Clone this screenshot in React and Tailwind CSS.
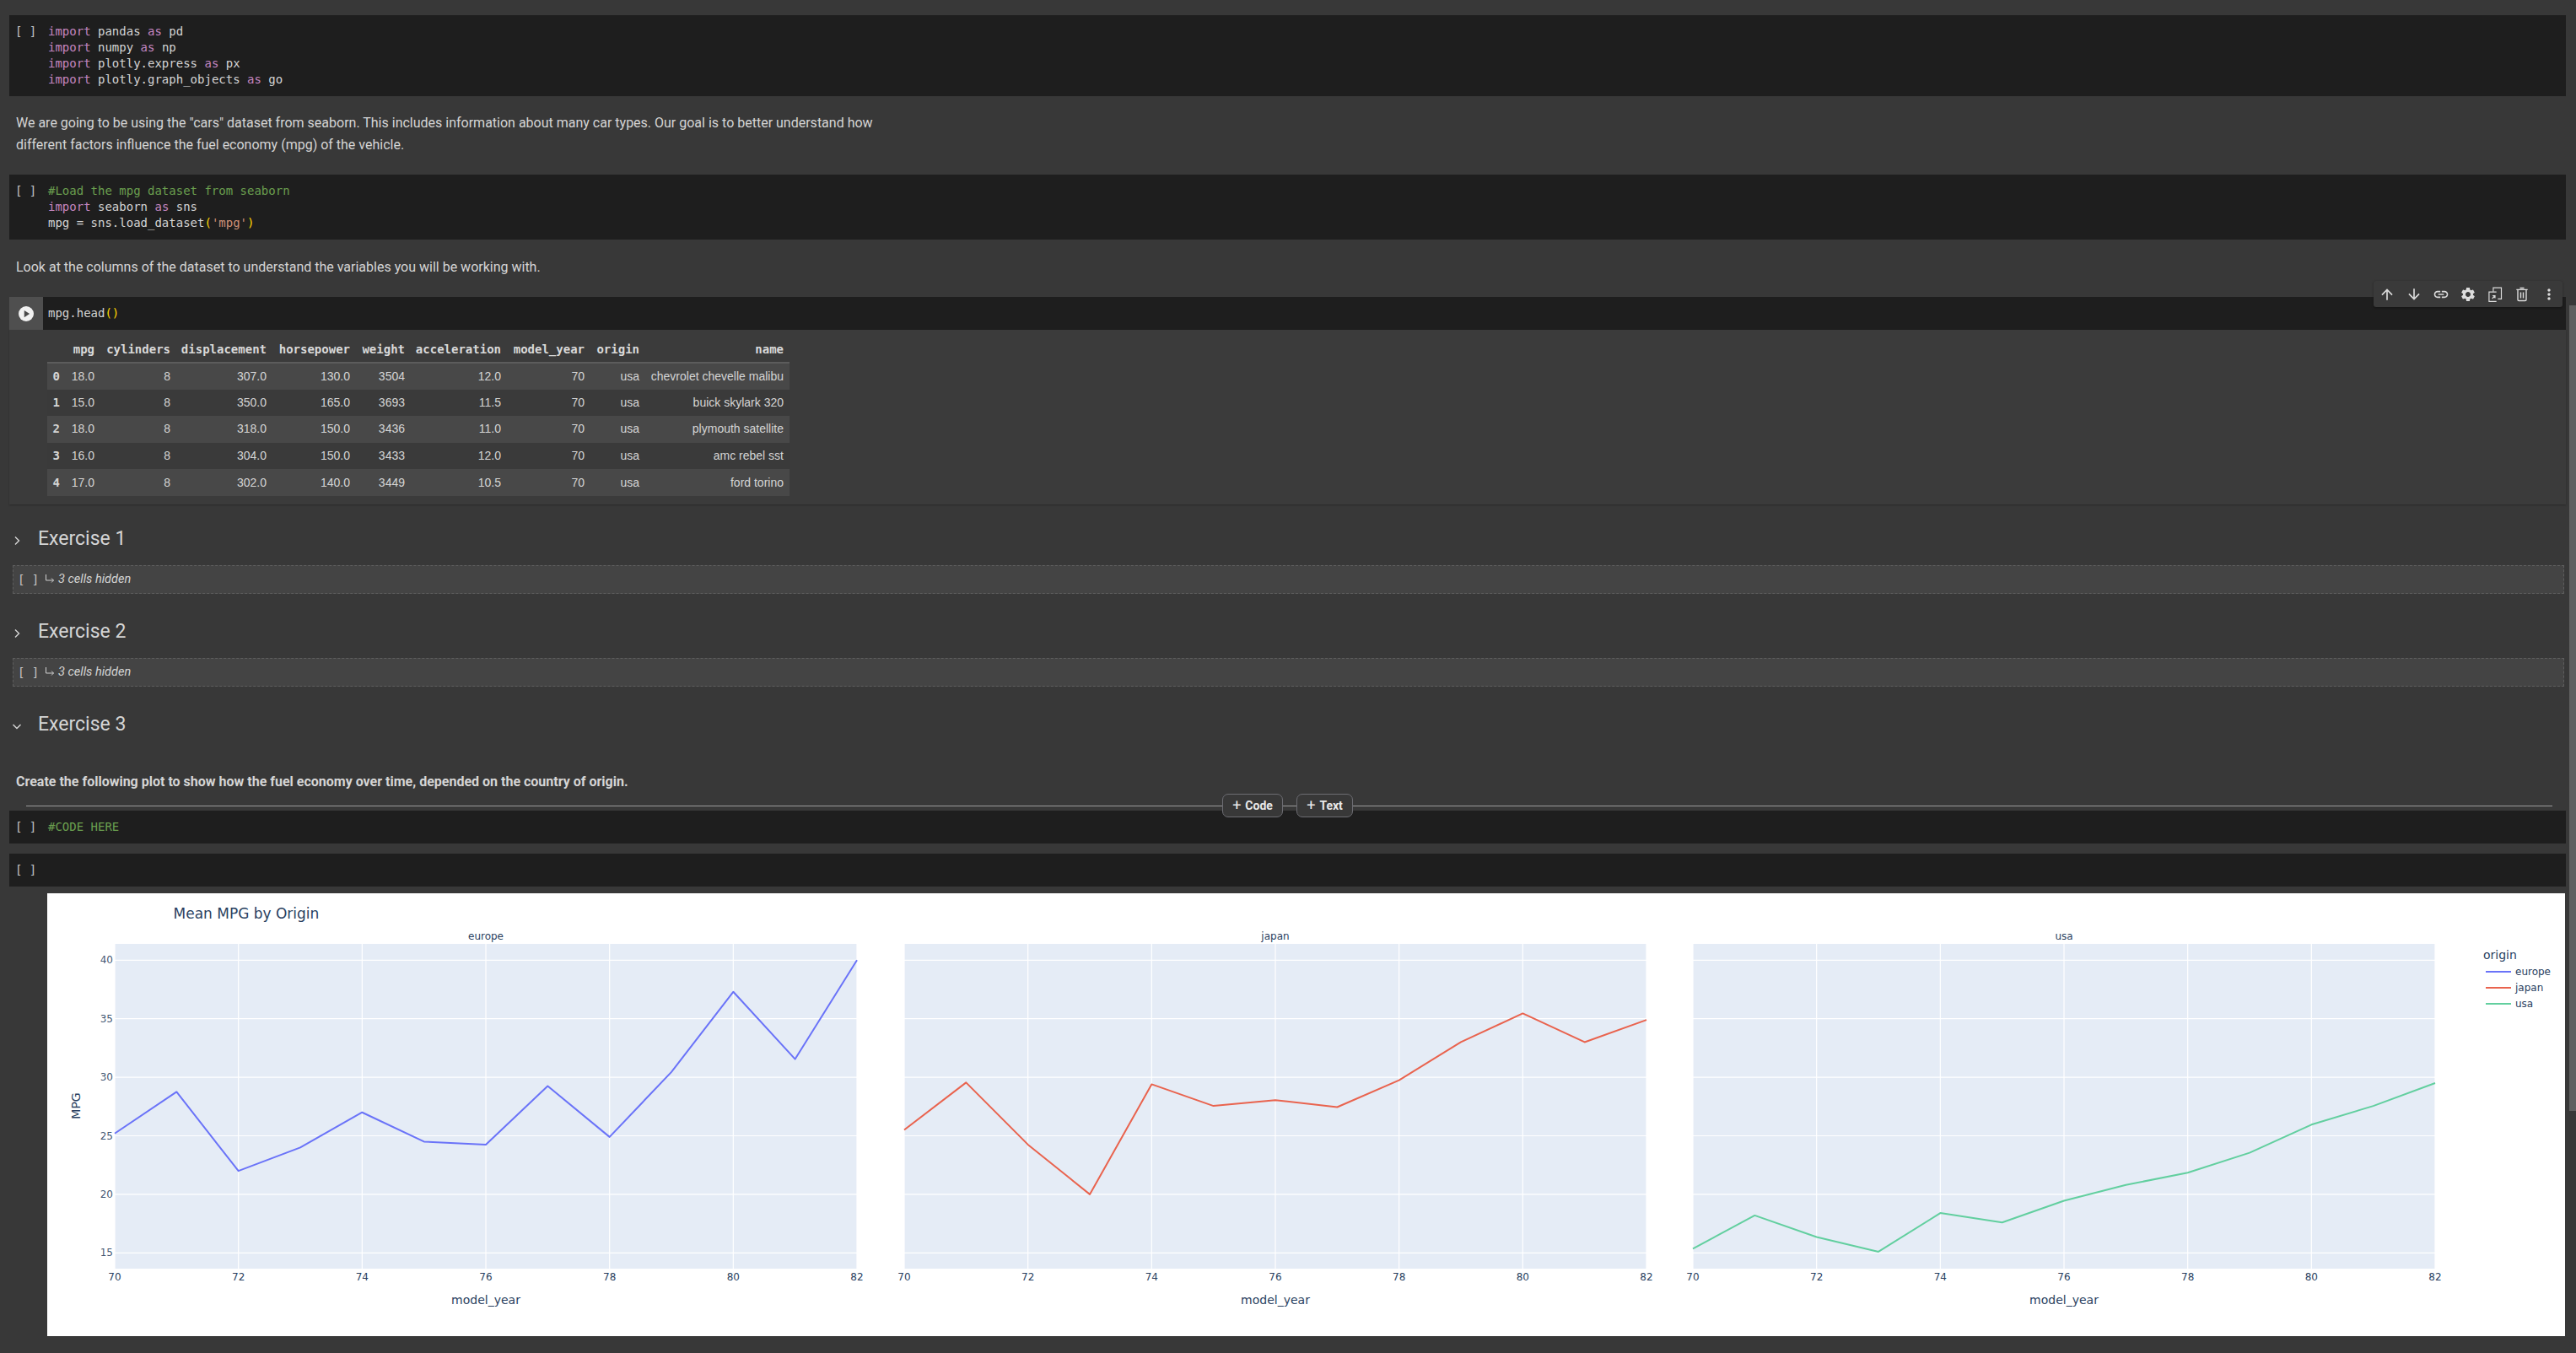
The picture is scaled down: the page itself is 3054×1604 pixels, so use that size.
const KW = 'text-[#c586c0]';
const COMMENT = 'text-[#6a9f4f]';

const rows = [
  ['0', '18.0', '8', '307.0', '130.0', '3504', '12.0', '70', 'usa', 'chevrolet chevelle malibu'],
  ['1', '15.0', '8', '350.0', '165.0', '3693', '11.5', '70', 'usa', 'buick skylark 320'],
  ['2', '18.0', '8', '318.0', '150.0', '3436', '11.0', '70', 'usa', 'plymouth satellite'],
  ['3', '16.0', '8', '304.0', '150.0', '3433', '12.0', '70', 'usa', 'amc rebel sst'],
  ['4', '17.0', '8', '302.0', '140.0', '3449', '10.5', '70', 'usa', 'ford torino'],
];
const columns = ['', 'mpg', 'cylinders', 'displacement', 'horsepower', 'weight', 'acceleration', 'model_year', 'origin', 'name'];
const columnWidths = [22, 41, 90, 114, 99, 65, 114, 99, 65, 171];

const panels = [
  { name: 'europe', x: 136, color: '#6a73f8', data: [25.2, 28.75, 22, 24, 27, 24.5, 24.25, 29.25, 24.9, 30.45, 37.3, 31.55, 40] },
  { name: 'japan', x: 1072, color: '#e9634e', data: [25.5, 29.55, 24.25, 20, 29.4, 27.55, 28.05, 27.45, 29.75, 33, 35.45, 33, 34.9] },
  { name: 'usa', x: 2007, color: '#62cf9f', data: [15.35, 18.2, 16.35, 15.1, 18.4, 17.6, 19.45, 20.8, 21.85, 23.55, 25.95, 27.55, 29.5] },
];

const toolbarIcons = [
  <path key="up" d="M4 12l1.41 1.41L11 7.83V20h2V7.83l5.58 5.59L20 12l-8-8-8 8z" />,
  <path key="down" d="M20 12l-1.41-1.41L13 16.17V4h-2v12.17l-5.58-5.59L4 12l8 8 8-8z" />,
  <path key="link" d="M3.9 12c0-1.71 1.39-3.1 3.1-3.1h4V7H7c-2.76 0-5 2.24-5 5s2.24 5 5 5h4v-1.9H7c-1.71 0-3.1-1.39-3.1-3.1zM8 13h8v-2H8v2zm9-6h-4v1.9h4c1.71 0 3.1 1.39 3.1 3.1s-1.39 3.1-3.1 3.1h-4V17h4c2.76 0 5-2.24 5-5s-2.24-5-5-5z" />,
  <path key="gear" d="M19.14 12.94c.04-.3.06-.61.06-.94 0-.32-.02-.64-.07-.94l2.03-1.58c.18-.14.23-.41.12-.61l-1.92-3.32c-.12-.22-.37-.29-.59-.22l-2.39.96c-.5-.38-1.03-.7-1.62-.94l-.36-2.54c-.04-.24-.24-.41-.48-.41h-3.84c-.24 0-.43.17-.47.41l-.36 2.54c-.59.24-1.13.57-1.62.94l-2.39-.96c-.22-.08-.47 0-.59.22L2.74 8.87c-.12.21-.08.47.12.61l2.03 1.58c-.05.3-.09.63-.09.94s.02.64.07.94l-2.03 1.58c-.18.14-.23.41-.12.61l1.92 3.32c.12.22.37.29.59.22l2.39-.96c.5.38 1.03.7 1.62.94l.36 2.54c.05.24.24.41.48.41h3.84c.24 0 .44-.17.47-.41l.36-2.54c.59-.24 1.13-.56 1.62-.94l2.39.96c.22.08.47 0 .59-.22l1.92-3.32c.12-.22.07-.47-.12-.61l-2.01-1.58zM12 15.6c-1.98 0-3.6-1.62-3.6-3.6s1.62-3.6 3.6-3.6 3.6 1.62 3.6 3.6-1.62 3.6-3.6 3.6z" />,
  <g key="mirror" fill="none" stroke="#dcdcdc" strokeWidth="1.400">
    <path d="M9.500 8V2.500H21V18.500H16" />
    <path d="M14 8.500H3.500V22H14" />
    <path d="M8 18L12 14M8.500 14H12V17.500" />
  </g>,
  <g key="trash" fill="none" stroke="#dcdcdc" strokeWidth="1.700">
    <path d="M6 6V19.500A1.500 1.500 0 0 0 7.500 21H16.500A1.500 1.500 0 0 0 18 19.500V6" />
    <path d="M4 5.200H20M9 3H15" />
    <path d="M10.200 9V17.500M13.800 9V17.500" />
  </g>,
  <path key="more" d="M12 8c1.1 0 2-.9 2-2s-.9-2-2-2-2 .9-2 2 .9 2 2 2zm0 2c-1.1 0-2 .9-2 2s.9 2 2 2 2-.9 2-2-.9-2-2-2zm0 6c-1.1 0-2 .9-2 2s.9 2 2 2 2-.9 2-2-.9-2-2-2z" />,
];

function CodeCell({ className = '', children }) {
  return (
    <div className={`ml-[11px] mr-[12px] bg-[#1e1e1e] py-[10px] flex font-['DejaVu_Sans_Mono',monospace] text-[14px] leading-[19px] text-[#d4d4d4] ${className}`}>
      <span className="w-[46px] pl-[7px] shrink-0 text-[#c4c4c4] whitespace-pre">[ ]</span>
      <pre className="font-['DejaVu_Sans_Mono',monospace] min-h-[19px]">{children}</pre>
    </div>
  );
}

function ImportLine({ children, alias }) {
  return (
    <div>
      <span className={KW}>import</span> {children} <span className={KW}>as</span> {alias}
    </div>
  );
}

function ExerciseHeading({ label, open, className = '' }) {
  return (
    <div className={`h-[40px] flex items-center ${className}`}>
      <svg width="12" height="12" viewBox="0 0 12 12" className="ml-[14px] mr-[19px] mt-[3px] shrink-0" fill="none" stroke="#d6d6d6" strokeWidth="1.400">
        {open ? <path d="M1.500 4l4.500 4.500L10.500 4" /> : <path d="M4 1.500L8.500 6 4 10.500" />}
      </svg>
      <h2 className="text-[23px] leading-[40px] text-[#d5d5d5]">{label}</h2>
    </div>
  );
}

function HiddenCells({ className = '' }) {
  return (
    <div className={`ml-[15px] mr-[14px] h-[34px] bg-[#444444] border border-dashed border-[#5e5e5e] flex items-center ${className}`}>
      <span className="w-[37px] pl-[5px] font-['DejaVu_Sans_Mono',monospace] text-[14px] text-[#c4c4c4] whitespace-pre">[ ]</span>
      <svg width="12" height="12" viewBox="0 0 12 12" className="mr-[4px] -mt-[2px]" fill="none" stroke="#cfcfcf" strokeWidth="1">
        <path d="M1.500 1V8H10.500M8 5.500L10.500 8 8 10.500" />
      </svg>
      <span className="italic text-[14.500px] text-[#d5d5d5]">3 cells hidden</span>
    </div>
  );
}

function OutputTable() {
  return (
    <table className="table-fixed w-[880px] border-collapse text-[14px] text-[#d5d5d5]">
      <colgroup>
        {columnWidths.map((w, i) => (
          <col key={i} style={{ width: w }} />
        ))}
      </colgroup>
      <thead>
        <tr className="h-[39px] border-b-2 border-[#5c5c5c]">
          {columns.map((c) => (
            <th key={c} className="text-right pt-[8px] pr-[7px] font-['DejaVu_Sans_Mono',monospace] text-[14px] font-bold text-[#d9d9d9]">{c}</th>
          ))}
        </tr>
      </thead>
      <tbody className="font-['Liberation_Sans',sans-serif]">
        {rows.map((row, i) => (
          <tr key={row[0]} className={`h-[31.600px] ${i % 2 === 0 ? 'bg-[#484848]' : 'bg-[#3a3a3a]'}`}>
            {row.map((cell, j) =>
              j === 0 ? (
                <th key={j} className="text-right pr-[7px] font-['DejaVu_Sans_Mono',monospace] text-[14px] font-bold">{cell}</th>
              ) : (
                <td key={j} className="pr-[7px] text-right whitespace-nowrap">{cell}</td>
              )
            )}
          </tr>
        ))}
      </tbody>
    </table>
  );
}

function MpgChart() {
  const top = 1119;
  const bottom = 1504;
  const panelW = 880;
  const yOf = (v) => 1138.3 + (40 - v) * 13.88;
  const xOf = (px, i) => px + i * (panelW / 12);
  const yTicks = [40, 35, 30, 25, 20, 15];
  const xTicks = [70, 72, 74, 76, 78, 80, 82];
  const legend = panels.map((p, i) => ({ ...p, y: 1152 + i * 19 }));

  return (
    <svg viewBox="56 1059 2985 525" width="2985" height="525" className="block font-['DejaVu_Sans',sans-serif]" fill="#2a3f5f">
      <text x="205.500" y="1089" fontSize="17">Mean MPG by Origin</text>
      <text x="90" y="1311" fontSize="14" textAnchor="middle" transform="rotate(-90 90 1311)" dominantBaseline="central">MPG</text>
      {yTicks.map((t) => (
        <text key={t} x="134" y={yOf(t) + 4} fontSize="12" textAnchor="end" fillOpacity="0.9">{t}</text>
      ))}
      {panels.map((p) => (
        <g key={p.name}>
          <rect x={p.x} y={top} width={panelW} height={bottom - top} fill="#e5ecf6" />
          {yTicks.map((t) => (
            <line key={t} x1={p.x} x2={p.x + panelW} y1={yOf(t)} y2={yOf(t)} stroke="#fff" strokeWidth="1.200" />
          ))}
          {xTicks.map((t) => (
            <line key={t} x1={xOf(p.x, t - 70)} x2={xOf(p.x, t - 70)} y1={top} y2={bottom} stroke="#fff" strokeWidth="1.200" />
          ))}
          <polyline
            fill="none"
            stroke={p.color}
            strokeWidth="2"
            strokeLinejoin="round"
            points={p.data.map((v, i) => `${xOf(p.x, i)},${yOf(v)}`).join(' ')}
          />
          <text x={p.x + panelW / 2} y="1114" fontSize="12" textAnchor="middle">{p.name}</text>
          {xTicks.map((t) => (
            <text key={t} x={xOf(p.x, t - 70)} y="1518" fontSize="12" textAnchor="middle">{t}</text>
          ))}
          <text x={p.x + panelW / 2} y="1546" fontSize="14" textAnchor="middle">model_year</text>
        </g>
      ))}
      <text x="2944" y="1137" fontSize="14">origin</text>
      {legend.map((l) => (
        <g key={l.name}>
          <line x1="2947" x2="2977" y1={l.y} y2={l.y} stroke={l.color} strokeWidth="2" />
          <text x="2982" y={l.y + 4} fontSize="12">{l.name}</text>
        </g>
      ))}
    </svg>
  );
}

export default function App() {
  return (
    <div className="relative h-[1604px] overflow-hidden bg-[#383838] pt-[18px] font-['Roboto',sans-serif] text-[#d5d5d5]">
      <CodeCell>
        <ImportLine alias="pd">pandas</ImportLine>
        <ImportLine alias="np">numpy</ImportLine>
        <ImportLine alias="px">plotly.express</ImportLine>
        <ImportLine alias="go">plotly.graph_objects</ImportLine>
      </CodeCell>

      <p className="mt-[19px] mb-[22px] pl-[19px] text-[16px] leading-[26px] w-[1060px]">
        We are going to be using the "cars" dataset from seaborn. This includes information about many car types. Our goal is to better understand how different factors influence the fuel economy (mpg) of the vehicle.
      </p>

      <CodeCell>
        <div className={COMMENT}>#Load the mpg dataset from seaborn</div>
        <ImportLine alias="sns">seaborn</ImportLine>
        <div>
          mpg = sns.load_dataset<span className="text-[#ffd700]">(</span><span className="text-[#ce9178]">'mpg'</span><span className="text-[#ffd700]">)</span>
        </div>
      </CodeCell>

      <p className="mt-[20px] mb-[22px] pl-[19px] text-[16px] leading-[26px]">Look at the columns of the dataset to understand the variables you will be working with.</p>

      <div className="ml-[11px] mr-[12px]">
        <div className="h-[39px] bg-[#1e1e1e] flex items-center font-['DejaVu_Sans_Mono',monospace] text-[14px] text-[#d4d4d4]">
          <div className="w-[40px] h-full bg-[#4f4f4f] flex items-center justify-center mr-[6px]">
            <svg width="18" height="18" viewBox="0 0 24 24">
              <circle cx="12" cy="12" r="12" fill="#f1f1f1" />
              <path d="M9 6.500v11l8.500-5.500z" fill="#4a4a4a" />
            </svg>
          </div>
          mpg.head<span className="text-[#ffd700]">()</span>
        </div>
        <div className="h-[207px] bg-[#3b3b3b] pl-[45px] shadow-[0_1px_2px_rgba(0,0,0,0.25)]">
          <OutputTable />
        </div>
      </div>

      <ExerciseHeading label="Exercise 1" className="mt-[21px]" />
      <HiddenCells className="mt-[11px]" />
      <ExerciseHeading label="Exercise 2" className="mt-[25px]" />
      <HiddenCells className="mt-[11px]" />
      <ExerciseHeading label="Exercise 3" open className="mt-[25px]" />

      <p className="mt-[35px] pl-[19px] text-[16px] leading-[26px] font-bold">Create the following plot to show how the fuel economy over time, depended on the country of origin.</p>

      <CodeCell className="mt-[21px]">
        <div className={COMMENT}>#CODE HERE</div>
      </CodeCell>
      <CodeCell className="mt-[12px]" />

      <div className="mt-[8px] ml-[56px] w-[2985px] bg-white">
        <MpgChart />
      </div>

      {/* add-cell divider sits over the cell below */}
      <div className="absolute left-[31px] w-[2995px] top-[941px] h-[28px] flex items-center">
        <div className="flex-1 h-px bg-[#9a9a9a]" />
        <button className="w-[72px] h-[28px] rounded-[7px] border border-[#6c6c72] bg-[#383838] flex items-center justify-center gap-[5px] text-[14px] font-bold text-[#e8e8e8]">
          <span className="text-[18px] font-normal leading-none">+</span>Code
        </button>
        <div className="w-[16px] h-px bg-[#9a9a9a]" />
        <button className="w-[67px] h-[28px] rounded-[7px] border border-[#6c6c72] bg-[#383838] flex items-center justify-center gap-[5px] text-[14px] font-bold text-[#e8e8e8]">
          <span className="text-[18px] font-normal leading-none">+</span>Text
        </button>
        <div className="w-[1422px] h-px bg-[#9a9a9a]" />
      </div>

      {/* floating cell toolbar */}
      <div className="absolute left-[2814px] top-[333px] h-[31px] w-[224px] bg-[#3a3a3a] rounded-[3px] shadow-[0_1px_3px_rgba(0,0,0,0.35)] flex items-center">
        {toolbarIcons.map((icon, i) => (
          <div key={i} className="w-[32px] flex justify-center">
            <svg width="20" height="20" viewBox="0 0 24 24" fill="#dcdcdc">{icon}</svg>
          </div>
        ))}
      </div>

      {/* overlay scrollbar */}
      <div className="absolute left-[3046px] top-[362px] w-[8px] h-[955px] bg-[#5f5f5f]" />
    </div>
  );
}
